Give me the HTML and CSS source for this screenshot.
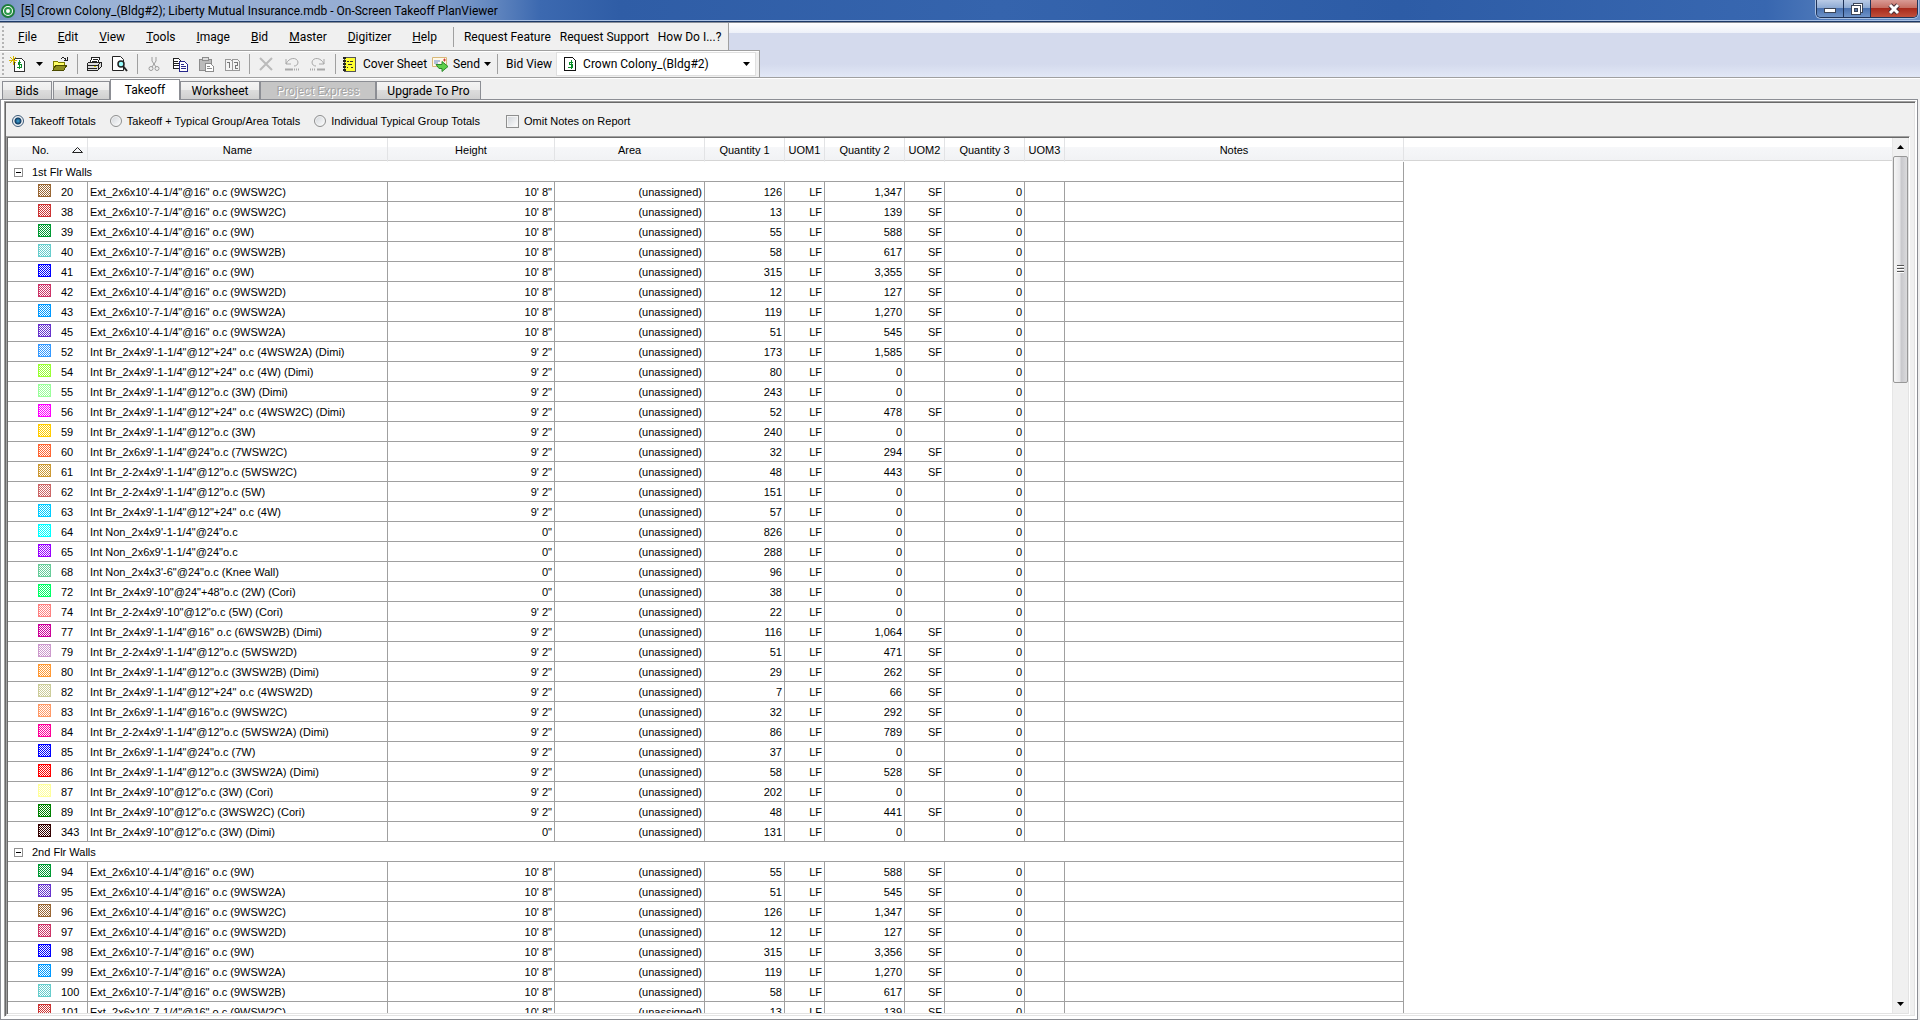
FILE: index.html
```
<!DOCTYPE html>
<html lang="en">
  <head>
    <meta charset="UTF-8" />
    <meta name="viewport" content="width=device-width, initial-scale=1.0" />
    <title>On-Screen Takeoff PlanViewer</title>
    <link rel="stylesheet" href="styles.css">
  </head>
  <body>
    <header class="titlebar">
      <svg class="app-icon" width="14" height="14" viewBox="0 0 14 14">
        <circle cx="7" cy="7" r="6" fill="#fff" stroke="#1e7d3c" stroke-width="2" />
        <circle cx="7" cy="7" r="3" fill="#fff" stroke="#2c9a4c" stroke-width="2" />
      </svg>
      <h1>[5] Crown Colony_(Bldg#2); Liberty Mutual Insurance.mdb - On-Screen Takeoff PlanViewer</h1>
      <div class="window-buttons">
        <button type="button" class="win-min" aria-label="Minimize">
          <svg width="14" height="12" viewBox="0 0 14 12"><rect x="1.500" y="5.500" width="11" height="4" fill="#fff" stroke="#3c4658" /></svg>
        </button>
        <button type="button" class="win-restore" aria-label="Restore">
          <svg width="14" height="14" viewBox="0 0 14 14">
            <rect x="3.500" y="1.500" width="9" height="9" fill="#fff" stroke="#3c4658" />
            <rect x="1.500" y="3.500" width="9" height="9" fill="#fff" stroke="#3c4658" />
            <rect x="4.500" y="6.500" width="3" height="3" fill="#5577aa" stroke="#3c4658" />
          </svg>
        </button>
        <button type="button" class="win-close" aria-label="Close">
          <svg width="14" height="12" viewBox="0 0 14 12">
            <path d="M3 2l8 8M11 2l-8 8" stroke="#4a3038" stroke-width="5" />
            <path d="M3 2l8 8M11 2l-8 8" stroke="#fff" stroke-width="3" />
          </svg>
        </button>
      </div>
    </header>

    <div class="rebar">
      <nav class="menubar">
        <span class="grip"></span>
        <button type="button"><u>F</u>ile</button>
        <button type="button"><u>E</u>dit</button>
        <button type="button"><u>V</u>iew</button>
        <button type="button"><u>T</u>ools</button>
        <button type="button"><u>I</u>mage</button>
        <button type="button"><u>B</u>id</button>
        <button type="button"><u>M</u>aster</button>
        <button type="button"><u>D</u>igitizer</button>
        <button type="button"><u>H</u>elp</button>
        <span class="separator"></span>
        <button type="button" class="request">Request Feature</button>
        <button type="button" class="request">Request Support</button>
        <button type="button" class="request">How Do I...?</button>
      </nav>

      <div class="toolbar">
        <span class="grip"></span>
        <button type="button" class="tool" aria-label="New bid">
          <svg width="16" height="16" viewBox="0 0 16 16" shape-rendering="crispEdges">
            <path d="M5 2h7l3 3v10H5z" fill="#fff" stroke="#333" />
            <path d="M12 6H9v2h3v3H8M10 4v9" fill="none" stroke="#0a8f2a" />
            <path d="M4 0v9M0 4h8M1 1l6 6M7 1L1 7" stroke="#d8b800" />
          </svg>
        </button>
        <button type="button" class="caret" aria-label="New bid options"><svg width="7" height="4" viewBox="0 0 7 4"><path d="M0 0h7L3.500 4z" /></svg></button>
        <button type="button" class="tool" aria-label="Open">
          <svg width="16" height="16" viewBox="0 0 16 16" shape-rendering="crispEdges">
            <path d="M1 14V5h4l1 1h6v3" fill="#ffff66" stroke="#7d7d00" />
            <path d="M1 14l3-5h11l-3 5z" fill="#8f8f1e" stroke="#4b4b00" />
            <path d="M9 3c1-2 4-2 5 1M15 1v3h-3" fill="none" stroke="#222" />
          </svg>
        </button>
        <span class="separator"></span>
        <button type="button" class="tool" aria-label="Print">
          <svg width="16" height="16" viewBox="0 0 16 16" shape-rendering="crispEdges">
            <path d="M4 7l2-6h8l-2 6z" fill="#fff" stroke="#222" />
            <path d="M7 3h5M6 5h5" stroke="#222" />
            <path d="M1 8l2-2h12v5l-3 3H1z" fill="#ddd" stroke="#222" />
            <path d="M1 9h11v5M12 9l3-3M2 12h9" fill="none" stroke="#222" />
            <path d="M8 10h2" stroke="#d8d000" />
          </svg>
        </button>
        <button type="button" class="tool" aria-label="Print preview">
          <svg width="16" height="16" viewBox="0 0 16 16">
            <path d="M.500.500h8l3 3v11h-11z" fill="#fff" stroke="#222" />
            <circle cx="9" cy="8" r="3" fill="#9ff" stroke="#222" stroke-width="1.500" />
            <path d="M11 10l4 5" stroke="#222" stroke-width="2" />
          </svg>
        </button>
        <span class="separator"></span>
        <button type="button" class="tool" aria-label="Cut" disabled>
          <svg width="16" height="16" viewBox="0 0 16 16" fill="none" stroke="#9c9c9c">
            <path d="M6 1v4l4 6M10 1v4l-4 6" />
            <circle cx="5" cy="12.500" r="2" /><circle cx="11" cy="12.500" r="2" />
          </svg>
        </button>
        <button type="button" class="tool" aria-label="Copy">
          <svg width="16" height="16" viewBox="0 0 16 16" fill="#fff" shape-rendering="crispEdges">
            <path d="M1 2h5l3 3v7H1z" stroke="#222" />
            <path d="M2 5h4M2 7h5M2 9h5" stroke="#222" />
            <path d="M7 5h5l3 3v7H7z" stroke="#28288c" />
            <path d="M9 8h3M9 10h5M9 12h5" stroke="#28288c" />
          </svg>
        </button>
        <button type="button" class="tool" aria-label="Paste" disabled>
          <svg width="16" height="16" viewBox="0 0 16 16" shape-rendering="crispEdges" stroke="#8c8c8c">
            <path d="M1 3h12v11H1z" fill="#bbb" />
            <path d="M4 1h6v3H4z" fill="#ddd" />
            <path d="M7 7h5l3 3v5H7z" fill="#fff" />
            <path d="M9 10h3M9 12h5" />
          </svg>
        </button>
        <button type="button" class="tool" aria-label="Renumber" disabled>
          <svg width="16" height="16" viewBox="0 0 16 16" shape-rendering="crispEdges" fill="#f4f4f4" stroke="#999">
            <path d="M1 3h5l2 2v9H1zM8 3h5l2 2v9H8z" />
            <path d="M3 6h2v6M10 6h3v3h-2v3h3" fill="none" stroke="#777" />
          </svg>
        </button>
        <span class="separator"></span>
        <button type="button" class="tool" aria-label="Delete" disabled>
          <svg width="16" height="16" viewBox="0 0 16 16"><path d="M2 2l12 12M14 2L2 14" stroke="#bbb" stroke-width="2" /></svg>
        </button>
        <button type="button" class="tool" aria-label="Undo" disabled>
          <svg width="16" height="16" viewBox="0 0 16 16" fill="none" stroke="#a8a8a8">
            <path d="M2 3v5h5M2 8c3-7 11-7 12-2 0 3-2 4-4 4" />
            <path d="M1 13.500h8" stroke-width="2" /><path d="M10 13.500h6" stroke-width="2" stroke-dasharray="1 1" />
          </svg>
        </button>
        <button type="button" class="tool" aria-label="Redo" disabled>
          <svg width="16" height="16" viewBox="0 0 16 16" fill="none" stroke="#a8a8a8">
            <path d="M14 3v5H9M14 8C11 1 3 1 2 6c0 3 2 4 4 4" />
            <path d="M7 13.500h8" stroke-width="2" /><path d="M0 13.500h6" stroke-width="2" stroke-dasharray="1 1" />
          </svg>
        </button>
        <span class="separator"></span>
        <button type="button" class="tool labelled">
          <svg width="16" height="16" viewBox="0 0 16 16" shape-rendering="crispEdges">
            <path d="M3 1h11v14H3z" fill="#ffff33" stroke="#555" />
            <path d="M3 1v15" stroke="#222" stroke-width="3" stroke-dasharray="2 1" />
            <path d="M6 5h2M9 5h3M7 8h4M6 11h1M10 11h2" stroke="#333" />
          </svg>
          Cover Sheet
        </button>
        <button type="button" class="tool labelled send">
          <svg width="18" height="16" viewBox="0 0 18 16">
            <path d="M1.500 1.500h14v9h-14z" fill="#fff8e8" stroke="#d8b878" />
            <path d="M3 5h6M3 7h4" stroke="#6688cc" />
            <path d="M13 3h1v2h-1z" stroke="#e04040" />
            <path d="M5 8.500h6v-3l6 5-6 5v-3H8z" fill="#5fd04a" stroke="#2c8a2c" />
          </svg>
          Send
          <svg width="7" height="4" viewBox="0 0 7 4"><path d="M0 0h7L3.500 4z" /></svg>
        </button>
        <span class="separator"></span>
        <label for="bid-view">Bid View</label>
        <div class="combo">
          <svg width="14" height="16" viewBox="0 0 14 16" shape-rendering="crispEdges">
            <path d="M1.500 1.500h8l3 3v10h-11z" fill="#fff" stroke="#111" />
            <path d="M10 6H6v2h3v3H5M8 4v9" fill="none" stroke="#0a8f2a" />
          </svg>
          <select id="bid-view">
            <option>Crown Colony_(Bldg#2)</option>
          </select>
          <svg width="7" height="4" viewBox="0 0 7 4"><path d="M0 0h7L3.500 4z" /></svg>
        </div>
      </div>
    </div>

    <div class="tabs" role="tablist">
      <button type="button" role="tab" class="tab-bids">Bids</button>
      <button type="button" role="tab" class="tab-image">Image</button>
      <button type="button" role="tab" class="tab-takeoff active">Takeoff</button>
      <button type="button" role="tab" class="tab-worksheet">Worksheet</button>
      <button type="button" role="tab" class="tab-express" disabled>Project Express</button>
      <button type="button" role="tab" class="tab-upgrade">Upgrade To Pro</button>
    </div>

    <main class="page">
      <div class="panel">
        <form class="options">
          <label><input type="radio" name="totals" checked />Takeoff Totals</label>
          <label><input type="radio" name="totals" />Takeoff + Typical Group/Area Totals</label>
          <label><input type="radio" name="totals" />Individual Typical Group Totals</label>
          <label class="omit"><input type="checkbox" name="omit" />Omit Notes on Report</label>
        </form>

        <div class="grid">
          <div class="grid-body">
            <table>
              <colgroup>
                <col class="col-no" />
                <col class="col-name" />
                <col class="col-height" />
                <col class="col-area" />
                <col class="col-qty" />
                <col class="col-uom" />
                <col class="col-qty" />
                <col class="col-uom" />
                <col class="col-qty" />
                <col class="col-uom" />
                <col class="col-notes" />
                <col />
              </colgroup>
              <thead>
                <tr>
                  <th class="no-head">
                    <div>No.
                      <svg width="11" height="6" viewBox="0 0 11 6"><path d="M.500 5.500h10L5.500.500z" fill="none" stroke="#222" /></svg>
                    </div>
                  </th>
                  <th>Name</th>
                  <th>Height</th>
                  <th>Area</th>
                  <th>Quantity 1</th>
                  <th>UOM1</th>
                  <th>Quantity 2</th>
                  <th>UOM2</th>
                  <th>Quantity 3</th>
                  <th>UOM3</th>
                  <th>Notes</th>
                  <th class="filler"></th>
                </tr>
              </thead>
              <tbody id="rows"></tbody>
            </table>
          </div>
          <div class="scrollbar">
            <button type="button" aria-label="Scroll up"><svg width="7" height="4" viewBox="0 0 7 4"><path d="M0 4h7L3.500 0z" /></svg></button>
            <div class="track"><div class="thumb"><i></i><i></i><i></i></div></div>
            <button type="button" aria-label="Scroll down"><svg width="7" height="4" viewBox="0 0 7 4"><path d="M0 0h7L3.500 4z" /></svg></button>
          </div>
        </div>
      </div>
    </main>

    <script>
      // no, color, name, height, quantity 1, quantity 2
      const groups = [
        {
          title: "1st Flr Walls",
          items: [
            [20, "#996633", `Ext_2x6x10'-4-1/4"@16" o.c (9WSW2C)`, `10' 8"`, "126", "1,347"],
            [38, "#cc3333", `Ext_2x6x10'-7-1/4"@16" o.c (9WSW2C)`, `10' 8"`, "13", "139"],
            [39, "#009933", `Ext_2x6x10'-4-1/4"@16" o.c (9W)`, `10' 8"`, "55", "588"],
            [40, "#66cccc", `Ext_2x6x10'-7-1/4"@16" o.c (9WSW2B)`, `10' 8"`, "58", "617"],
            [41, "#0000ff", `Ext_2x6x10'-7-1/4"@16" o.c (9W)`, `10' 8"`, "315", "3,355"],
            [42, "#cc3366", `Ext_2x6x10'-4-1/4"@16" o.c (9WSW2D)`, `10' 8"`, "12", "127"],
            [43, "#0099ff", `Ext_2x6x10'-7-1/4"@16" o.c (9WSW2A)`, `10' 8"`, "119", "1,270"],
            [45, "#6633cc", `Ext_2x6x10'-4-1/4"@16" o.c (9WSW2A)`, `10' 8"`, "51", "545"],
            [52, "#3399ff", `Int Br_2x4x9'-1-1/4"@12"+24" o.c (4WSW2A) (Dimi)`, `9' 2"`, "173", "1,585"],
            [54, "#99ff33", `Int Br_2x4x9'-1-1/4"@12"+24" o.c (4W) (Dimi)`, `9' 2"`, "80", "0"],
            [55, "#99ff99", `Int Br_2x4x9'-1-1/4"@12"o.c (3W) (Dimi)`, `9' 2"`, "243", "0"],
            [56, "#ff00ff", `Int Br_2x4x9'-1-1/4"@12"+24" o.c (4WSW2C) (Dimi)`, `9' 2"`, "52", "478"],
            [59, "#ffcc00", `Int Br_2x4x9'-1-1/4"@12"o.c (3W)`, `9' 2"`, "240", "0"],
            [60, "#ff6633", `Int Br_2x6x9'-1-1/4"@24"o.c (7WSW2C)`, `9' 2"`, "32", "294"],
            [61, "#cc9933", `Int Br_2-2x4x9'-1-1/4"@12"o.c (5WSW2C)`, `9' 2"`, "48", "443"],
            [62, "#cc6666", `Int Br_2-2x4x9'-1-1/4"@12"o.c (5W)`, `9' 2"`, "151", "0"],
            [63, "#00ccff", `Int Br_2x4x9'-1-1/4"@12"+24" o.c (4W)`, `9' 2"`, "57", "0"],
            [64, "#00ffff", `Int Non_2x4x9'-1-1/4"@24"o.c`, `0"`, "826", "0"],
            [65, "#9900ff", `Int Non_2x6x9'-1-1/4"@24"o.c`, `0"`, "288", "0"],
            [68, "#66cc99", `Int Non_2x4x3'-6"@24"o.c (Knee Wall)`, `0"`, "96", "0"],
            [72, "#00ff66", `Int Br_2x4x9'-10"@24"+48"o.c (2W) (Cori)`, `0"`, "38", "0"],
            [74, "#ff8080", `Int Br_2-2x4x9'-10"@12"o.c (5W) (Cori)`, `9' 2"`, "22", "0"],
            [77, "#cc0099", `Int Br_2x4x9'-1-1/4"@16" o.c (6WSW2B) (Dimi)`, `9' 2"`, "116", "1,064"],
            [79, "#cc99cc", `Int Br_2-2x4x9'-1-1/4"@12"o.c (5WSW2D)`, `9' 2"`, "51", "471"],
            [80, "#ff9933", `Int Br_2x4x9'-1-1/4"@12"o.c (3WSW2B) (Dimi)`, `9' 2"`, "29", "262"],
            [82, "#cccc99", `Int Br_2x4x9'-1-1/4"@12"+24" o.c (4WSW2D)`, `9' 2"`, "7", "66"],
            [83, "#ff9966", `Int Br_2x6x9'-1-1/4"@16"o.c (9WSW2C)`, `9' 2"`, "32", "292"],
            [84, "#ff0099", `Int Br_2-2x4x9'-1-1/4"@12"o.c (5WSW2A) (Dimi)`, `9' 2"`, "86", "789"],
            [85, "#0000ff", `Int Br_2x6x9'-1-1/4"@24"o.c (7W)`, `9' 2"`, "37", "0"],
            [86, "#ff0000", `Int Br_2x4x9'-1-1/4"@12"o.c (3WSW2A) (Dimi)`, `9' 2"`, "58", "528"],
            [87, "#ffff99", `Int Br_2x4x9'-10"@12"o.c (3W) (Cori)`, `9' 2"`, "202", "0"],
            [89, "#008000", `Int Br_2x4x9'-10"@12"o.c (3WSW2C) (Cori)`, `9' 2"`, "48", "441"],
            [343, "#330000", `Int Br_2x4x9'-10"@12"o.c (3W) (Dimi)`, `0"`, "131", "0"],
          ],
        },
        {
          title: "2nd Flr Walls",
          items: [
            [94, "#009933", `Ext_2x6x10'-4-1/4"@16" o.c (9W)`, `10' 8"`, "55", "588"],
            [95, "#6633cc", `Ext_2x6x10'-4-1/4"@16" o.c (9WSW2A)`, `10' 8"`, "51", "545"],
            [96, "#996633", `Ext_2x6x10'-4-1/4"@16" o.c (9WSW2C)`, `10' 8"`, "126", "1,347"],
            [97, "#cc3366", `Ext_2x6x10'-4-1/4"@16" o.c (9WSW2D)`, `10' 8"`, "12", "127"],
            [98, "#0000ff", `Ext_2x6x10'-7-1/4"@16" o.c (9W)`, `10' 8"`, "315", "3,356"],
            [99, "#0099ff", `Ext_2x6x10'-7-1/4"@16" o.c (9WSW2A)`, `10' 8"`, "119", "1,270"],
            [100, "#66cccc", `Ext_2x6x10'-7-1/4"@16" o.c (9WSW2B)`, `10' 8"`, "58", "617"],
            [101, "#cc3333", `Ext_2x6x10'-7-1/4"@16" o.c (9WSW2C)`, `10' 8"`, "13", "139"],
          ],
        },
      ];

      let html = "";
      for (const group of groups) {
        html += `<tr class="group"><td colspan="11"><div><button type="button" class="toggle" aria-label="Collapse"></button>${group.title}</div></td><td class="filler"></td></tr>`;
        for (const [no, color, name, height, qty1, qty2] of group.items) {
          html += `<tr>
            <td class="no"><div><span class="swatch" style="color: ${color}"></span>${no}</div></td>
            <td class="name">${name}</td>
            <td>${height}</td>
            <td>(unassigned)</td>
            <td>${qty1}</td>
            <td>LF</td>
            <td>${qty2}</td>
            <td>${qty2 === "0" ? "" : "SF"}</td>
            <td>0</td>
            <td></td>
            <td></td>
            <td class="filler"></td>
          </tr>`;
        }
      }
      document.getElementById("rows").innerHTML = html;
    </script>
  </body>
</html>
```

FILE: styles.css
```
* {
  box-sizing: border-box;
}

body {
  font-family: Roboto, "Liberation Sans", sans-serif;
  font-size: 12px;
  color: #000;
  background-color: #f0f0f0;
  margin: 0;
  height: 100vh;
  display: flex;
  flex-direction: column;
  overflow: hidden;
}

button,
select {
  font: inherit;
  color: inherit;
  background: none;
  border: none;
  padding: 0;
  margin: 0;
}

svg {
  display: block;
  flex: none;
}

/* Title bar */
.titlebar {
  flex: none;
  height: 23px;
  display: flex;
  align-items: flex-start;
  padding: 0 2px 0 1px;
  border-bottom: 1px solid #8a8f99;
  background: linear-gradient(#1d3a68, #1d3a68) 0 100% / 100% 1px no-repeat,
    linear-gradient(#a9c0e2, #a9c0e2) 0 20px / 100% 1px no-repeat,
    linear-gradient(90deg, #7593c2 0, #9cb3d6 60px, #94acd2 420px, #6488c0 490px, #3c69b0 540px, #2f5da6 620px, #3564ad 1000px, #2d5ca6 1400px, #3867b0 92%, #6f93c8 100%);
}

.app-icon {
  margin: 4px 6px 0 0;
}

.titlebar h1 {
  flex: 1;
  margin: 0;
  font-size: 12px;
  font-weight: normal;
  line-height: 22px;
  white-space: nowrap;
}

.window-buttons {
  display: flex;
  height: 18px;
  border: 1px solid #1f3358;
  border-top: none;
  border-radius: 0 0 5px 5px;
  overflow: hidden;
  box-shadow: 0 0 0 1px #a9c0e2;
}

.window-buttons button {
  width: 27px;
  display: flex;
  justify-content: center;
  align-items: center;
  border-right: 1px solid #1f3358;
  background: linear-gradient(#b9cbe6, #8ba8d2 50%, #4a72b0 50%, #6e93c8);
}

.window-buttons .win-close {
  width: 46px;
  border-right: none;
  background: linear-gradient(#d99a94, #c46a5e 50%, #a82a1c 50%, #c0503c);
}

/* Menu and toolbar */
.rebar {
  flex: none;
  display: flex;
  flex-direction: column;
  align-items: flex-start;
  border-bottom: 1px solid #a0a0a0;
  background: linear-gradient(#fff 0, #eef1f9 10px, #d4daed 10px, #d4daed 41px, #e2e8f6 100%);
}

.menubar,
.toolbar {
  display: flex;
  align-items: center;
  background-color: #f0f0f0;
  border-right: 1px solid #a0a0a0;
  white-space: nowrap;
}

.menubar {
  height: 27px;
  padding-right: 2px;
}

.toolbar {
  height: 27px;
  padding-right: 3px;
  border-top: 1px solid #a0a0a0;
  box-shadow: inset 0 1px #fff;
}

.grip {
  width: 2px;
  height: 22px;
  margin: 0 3px 0 2px;
  background: repeating-linear-gradient(#b4b4b4 0, #b4b4b4 2px, transparent 2px, transparent 4px);
}

.toolbar .grip {
  margin-right: 0;
}

.separator {
  width: 1px;
  height: 20px;
  background-color: #a0a0a0;
}

.menubar button {
  height: 22px;
  padding: 0 10px 0 11px;
}

.menubar .request {
  padding: 0 5px 0 4px;
}

.menubar .separator {
  margin: 0 6px;
}

.tool {
  width: 26px;
  height: 22px;
  display: flex;
  justify-content: center;
  align-items: center;
}

.caret {
  padding: 0 4px 0 6px;
}

.toolbar .separator {
  margin: 0 3px 0 4px;
}

.tool.labelled {
  width: auto;
  padding: 0 2px;
  gap: 6px;
}

.tool.send {
  gap: 4px;
}

.toolbar label {
  margin: 0 4px 0 5px;
}

.combo {
  width: 200px;
  height: 24px;
  display: flex;
  align-items: center;
  padding: 0 5px 0 6px;
  border: 1px solid #e0e0e0;
  background-color: #fff;
}

.combo select {
  flex: 1;
  height: 20px;
  margin-left: 6px;
  appearance: none;
}

/* Tabs */
.tabs {
  flex: none;
  height: 21px;
  display: flex;
  align-items: flex-end;
  padding-left: 2px;
  border-top: 1px solid #fff;
}

.tabs button {
  height: 18px;
  border: 1px solid #8c8e94;
  border-bottom: none;
  background: linear-gradient(#f4f4f4, #ececec 50%, #dcdcdc 50%, #d0d0d0);
}

.tabs .tab-bids {
  width: 50px;
  margin-right: 1px;
}

.tabs .tab-image {
  width: 57px;
}

.tabs .tab-takeoff {
  width: 70px;
}

.tabs .tab-worksheet {
  width: 80px;
}

.tabs .tab-express {
  width: 116px;
}

.tabs .tab-upgrade {
  width: 105px;
}

/* covers the page border below it */
.tabs .active {
  height: 21px;
  margin-bottom: -1px;
  background: #fff;
  z-index: 1;
}

.tabs button:disabled {
  color: #a4a4a4;
  background: #c6c6c6;
  text-shadow: 1px 1px #fff;
}

/* Takeoff page */
.page {
  flex: 1;
  min-height: 0;
  display: flex;
  margin-right: 2px;
  padding: 1px 1px 2px 3px;
  border: 1px solid #8c8e94;
  background-color: #fff;
  font-family: "Liberation Sans", Arial, sans-serif;
  font-size: 11px;
}

.panel,
.grid {
  flex: 1;
  min-width: 0;
  min-height: 0;
  display: flex;
  padding: 1px;
  border: 1px solid #fff;
  border-top-color: #a0a0a0;
  border-left-color: #a0a0a0;
  box-shadow: inset 1px 1px #696969, inset -1px -1px #e3e3e3;
}

.panel {
  flex-direction: column;
  background-color: #f0f0f0;
}

.options {
  flex: none;
  height: 33px;
  display: flex;
  align-items: center;
  gap: 14px;
  padding: 3px 0 0 6px;
}

.options label {
  display: flex;
  align-items: center;
  gap: 5px;
}

.options .omit {
  margin-left: 12px;
}

.options input {
  appearance: none;
  width: 12px;
  height: 12px;
  margin: 0;
  border: 1px solid #8e8f8f;
  background: linear-gradient(135deg, #cfd3d8, #fff);
  box-shadow: inset 0 0 0 1px #f4f4f4;
}

.options input[type="checkbox"] {
  width: 13px;
  height: 13px;
}

.options input[type="radio"] {
  border-radius: 50%;
}

.options input[type="radio"]:checked {
  border-color: #3c5a78;
  background: radial-gradient(circle, #3fa9dc 0, #10395f 3px, #e4eaf0 4px);
}

.grid {
  margin-right: 4px;
  background-color: #fff;
}

.grid-body {
  flex: 1;
  min-width: 0;
  overflow: hidden;
}

table {
  width: 100%;
  table-layout: fixed;
  border-collapse: separate;
  border-spacing: 0;
  line-height: 18px;
}

.col-no,
.col-qty {
  width: 80px;
}

.col-name {
  width: 300px;
}

.col-height {
  width: 167px;
}

.col-area {
  width: 150px;
}

.col-uom {
  width: 40px;
}

.col-notes {
  width: 339px;
}

th {
  height: 24px;
  padding: 0;
  font-weight: normal;
  border-right: 1px solid #e2e3e5;
  border-bottom: 1px solid #fff;
  background: linear-gradient(#fff 9px, #f6f7f9 9px, #f1f2f4);
  box-shadow: inset 0 -1px #d5d5d5;
}

.no-head div {
  display: flex;
  align-items: center;
  justify-content: space-between;
  padding: 0 4px 0 24px;
}

td {
  height: 20px;
  padding: 1px 2px 0;
  text-align: right;
  white-space: nowrap;
  overflow: hidden;
  border-right: 1px solid #a0a0a0;
  border-bottom: 1px solid #a0a0a0;
}

th.filler,
td.filler {
  border-right: none;
}

td.filler {
  border-bottom: none;
}

td.name,
td.no,
.group td {
  text-align: left;
}

td.no {
  padding-left: 30px;
}

td.no div,
.group div {
  display: flex;
  align-items: center;
}

td.no div {
  align-items: flex-start;
}

.swatch {
  width: 13px;
  height: 13px;
  margin: 1px 10px 0 0;
  border: 1px solid currentColor;
  background: repeating-conic-gradient(#fff 0 25%, currentColor 0 50%) 0 0 / 2px 2px;
}

.group td {
  padding-left: 6px;
}

.toggle {
  width: 9px;
  height: 9px;
  margin-right: 9px;
  border: 1px solid #919191;
  background: linear-gradient(#000, #000) center / 5px 1px no-repeat;
}

/* Scrollbar */
.scrollbar {
  width: 16px;
  display: flex;
  flex-direction: column;
  border-left: 1px solid #e6e6e6;
  background-color: #f0f0f0;
}

.scrollbar button {
  height: 18px;
  display: flex;
  justify-content: center;
  align-items: center;
}

.scrollbar .track {
  flex: 1;
}

.scrollbar .thumb {
  height: 27%;
  display: flex;
  flex-direction: column;
  justify-content: center;
  align-items: center;
  gap: 1px;
  border: 1px solid #979797;
  border-radius: 2px;
  background: linear-gradient(90deg, #f5f5f5, #e6e6e8 45%, #c8c8cc 55%, #dadadc);
}

.scrollbar .thumb i {
  width: 7px;
  height: 2px;
  border-top: 1px solid #555;
  background-color: #fff;
}
```
